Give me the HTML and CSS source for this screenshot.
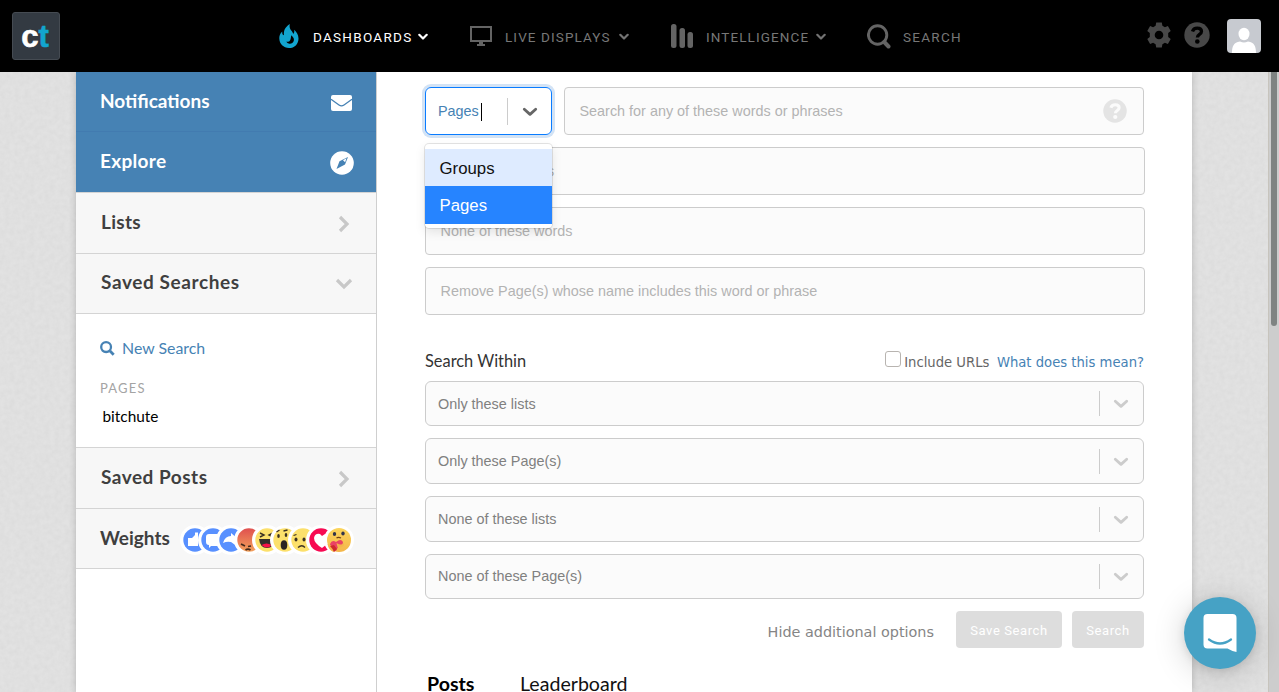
FILE: index.html
```html
<!DOCTYPE html>
<html lang="en">
<head>
<meta charset="utf-8">
<title>Search</title>
<link rel="stylesheet" href="styles.css">
</head>
<body>
<svg class="texture" aria-hidden="true"><filter id="grain"><feTurbulence type="fractalNoise" baseFrequency="0.2" numOctaves="3" seed="4"/><feColorMatrix values="0 0 0 0 0.45  0 0 0 0 0.45  0 0 0 0 0.45  0.2 0 0 0 -0.05"/></filter><rect width="100%" height="100%" filter="url(#grain)"/></svg>
<header class="topbar">
  <div class="logo"><span class="logo-c">c</span><span class="logo-t">t</span></div>
  <nav class="nav">
    <a class="nav-item active nav-dash">
      <svg width="20" height="24" viewBox="0 0 20 24"><path d="M10.800 0C5.500 3.600 4.600 7 5 11.200c-1.700-.5-1.900-2-1.700-3.800C1 9.400.3 11.700.3 14.300.3 19.900 4.500 24 10 24s9.500-4 9.500-9.600c0-3.800-2.100-6.600-4.300-8.600.3 1.900.1 3.200-1 4.100-.6-3.400-4.600-4-3.400-9.900zM12.300 11.300c2.200 1.900 3 3.600 2.500 5.500-.6 2.400-3.200 3.300-5 2.700-1.300-.4-2.100-1.200-2.300-2.100 1.500.8 2.700.4 3.500-.8 1.100-1.600.7-3.200 1.300-5.300z" fill="#12a5cf" fill-rule="evenodd"/></svg>
      <span class="nav-label">DASHBOARDS</span>
      <svg class="caret" width="10" height="8" viewBox="0 0 10 8"><path d="M1.300 1.800 5 5.500 8.700 1.800"/></svg>
    </a>
    <a class="nav-item nav-live">
      <svg width="22" height="21" viewBox="0 0 22 21"><path d="M1 1h20v14H1z" fill="none" stroke="#646464" stroke-width="2"/><path d="M9 15h4v3h2v2H7v-2h2z" fill="#646464"/></svg>
      <span class="nav-label">LIVE DISPLAYS</span>
      <svg class="caret" width="10" height="8" viewBox="0 0 10 8"><path d="M1.300 1.800 5 5.500 8.700 1.800"/></svg>
    </a>
    <a class="nav-item nav-intel">
      <svg width="23" height="24" viewBox="0 0 23 24" fill="#646464"><rect width="5.500" height="24" rx="2.500"/><rect x="8.500" y="4" width="5.500" height="20" rx="2.500"/><rect x="16.500" y="8" width="5.500" height="16" rx="2.500"/></svg>
      <span class="nav-label">INTELLIGENCE</span>
      <svg class="caret" width="10" height="8" viewBox="0 0 10 8"><path d="M1.300 1.800 5 5.500 8.700 1.800"/></svg>
    </a>
    <a class="nav-item nav-search">
      <svg width="24" height="25" viewBox="0 0 24 25" fill="none" stroke="#646464"><circle cx="10.600" cy="11" r="9.200" stroke-width="2.900"/><path d="m17.200 18 4.300 4.500" stroke-width="4" stroke-linecap="round"/></svg>
      <span class="nav-label">SEARCH</span>
    </a>
  </nav>
  <div class="tools">
    <svg width="26" height="26" viewBox="-13 -13 26 26" fill="#484848"><path d="M-2.800-12.500h5.600l.6 3.300 2.500 1.400 3-1.100 2.800 4.800-2.500 2.200v3.800l2.500 2.200-2.800 4.800-3-1.100-2.500 1.400-.6 3.300h-5.600l-.6-3.300-2.500-1.400-3 1.100-2.800-4.800 2.500-2.200v-3.800l-2.500-2.200 2.800-4.800 3 1.100 2.500-1.400zM0-4.300a4.300 4.300 0 1 0 0 8.600a4.300 4.300 0 1 0 0-8.600z" fill-rule="evenodd"/></svg>
    <svg width="26" height="26" viewBox="0 0 26 26"><circle cx="13" cy="13" r="12.700" fill="#484848"/><path d="M8.500 9.500C9.300 7 11 6.200 13.200 6.200c2.500 0 4.300 1.300 4.300 3.400 0 2.900-4.100 2.800-4.100 5.800" fill="none" stroke="#000" stroke-width="3.300"/><circle cx="13.300" cy="19.500" r="2.300" fill="#000"/></svg>
    <svg class="avatar" width="34" height="34" viewBox="0 0 34 34"><rect width="34" height="34" rx="4" fill="#c7cad0"/><ellipse cx="17" cy="15" rx="5.500" ry="6.200" fill="#fff"/><path d="M5 34c0-6 1.500-11 8-11.500 3 1.400 5 1.400 8 0 6.500.5 8 5.500 8 11.500z" fill="#fff"/></svg>
  </div>
</header>

<div class="page">
  <aside class="sidebar">
    <div class="side-row blue first"><span class="t-notif">Notifications</span>
      <svg class="mail" width="21" height="16" viewBox="0 0 21 16"><rect width="21" height="16" rx="2" fill="#fff"/><path d="M0 4.300 8 10q2.500 1.700 5 0l8-5.700" fill="none" stroke="#4682b4" stroke-width="1.300"/></svg></div>
    <div class="side-row blue second"><span class="t-explore">Explore</span>
      <svg class="compass" width="24" height="24" viewBox="0 0 24 24"><circle cx="12" cy="12" r="11.800" fill="#fff"/><path d="M18 6 15 13.500 6.500 18 9.500 10.200z" fill="#4682b4"/><path d="m13 9.300 3.500-2-1.400 3.900z" fill="#fff"/></svg></div>
    <div class="side-row"><span class="t-lists">Lists</span>
      <svg class="chev-r" width="12" height="18" viewBox="0 0 12 18"><path d="m2 2 7 7-7 7"/></svg></div>
    <div class="side-row open"><span class="t-ss">Saved Searches</span>
      <svg class="chev-d" width="18" height="12" viewBox="0 0 18 12"><path d="m2 2 7 7 7-7"/></svg></div>
    <div class="saved">
      <a class="new-search"><svg width="15" height="15" viewBox="0 0 15 15" fill="none" stroke="#4682b4"><circle cx="6.100" cy="6.100" r="4.900" stroke-width="2.300"/><path d="m10 10 3.700 3.700" stroke-width="2.800"/></svg><span>New Search</span></a>
      <div class="group">PAGES</div>
      <a class="saved-item">bitchute</a>
    </div>
    <div class="side-row posts"><span class="t-sp">Saved Posts</span>
      <svg class="chev-r" width="12" height="18" viewBox="0 0 12 18"><path d="m2 2 7 7-7 7"/></svg></div>
    <div class="side-row weights"><span class="t-w">Weights</span>
      <svg class="reactions" width="174" height="30" viewBox="0 0 174 30">
        <defs>
          <linearGradient id="angry" x2="0" y2="1"><stop stop-color="#e0504f"/><stop offset="1" stop-color="#f3a15b"/></linearGradient>
          <linearGradient id="care" x2="0" y2="1"><stop stop-color="#fbd55b"/><stop offset="1" stop-color="#f4b64a"/></linearGradient>
        </defs>
        <g><circle cx="15" cy="15" r="15" fill="#fff"/><circle cx="15" cy="15" r="11.700" fill="#5890ff"/><path d="M8 13h4v8H8zm4 0 3-3V7.500h3V21h-6z" fill="#fff"/></g>
        <g transform="translate(18)"><circle cx="15" cy="15" r="15" fill="#fff"/><circle cx="15" cy="15" r="11.700" fill="#5890ff"/><path d="M8 12q0-3 3-3h12v12H13l-2 2v-3q-3 0-3-3z" fill="#fff"/></g>
        <g transform="translate(36)"><circle cx="15" cy="15" r="15" fill="#fff"/><circle cx="15" cy="15" r="11.700" fill="#5890ff"/><path d="M7 18q2-7 8-7V8l7 6v8l-7-5q-4-1-8 1z" fill="#fff"/></g>
        <g transform="translate(54)"><circle cx="15" cy="15" r="15" fill="#fff"/><circle cx="15" cy="15" r="11.700" fill="url(#angry)"/><path d="m7 19 4 2m3 .5 3-.5m-5.500 4q2.500-1.700 5 0" fill="none" stroke="#42291d" stroke-width="1.700"/></g>
        <g transform="translate(72)"><circle cx="15" cy="15" r="15" fill="#fff"/><circle cx="15" cy="15" r="11.700" fill="#fce06b"/><path d="m8 8 4 2-4 2m13-4-4 2 4 2" fill="none" stroke="#3c3122" stroke-width="1.400"/><path d="M7 14h15q0 9-7 9t-8-9z" fill="#332c2b"/><path d="M9.500 20q5-3 10 0-4 5-10 0z" fill="#f80e48"/></g>
        <g transform="translate(90)"><circle cx="15" cy="15" r="15" fill="#fff"/><circle cx="15" cy="15" r="11.700" fill="#fce06b"/><ellipse cx="8.500" cy="11" rx="1.300" ry="2" fill="#3c3122"/><ellipse cx="16" cy="10" rx="1.300" ry="2" fill="#3c3122"/><ellipse cx="14" cy="20" rx="3.300" ry="4.700" fill="#2b2422"/><path d="m6.500 7 3-2m4 1 4-1" stroke="#3c3122" stroke-width="1.300"/></g>
        <g transform="translate(108)"><circle cx="15" cy="15" r="15" fill="#fff"/><circle cx="15" cy="15" r="11.700" fill="#fce06b"/><ellipse cx="8" cy="14.500" rx="1.500" ry="2" fill="#3c3122"/><ellipse cx="16" cy="14.500" rx="1.500" ry="2" fill="#3c3122"/><path d="m5.500 10.500 3-1M10 22.500q4-3.500 7 0" fill="none" stroke="#3c3122" stroke-width="1.300"/></g>
        <g transform="translate(126)"><circle cx="15" cy="15" r="15" fill="#fff"/><circle cx="15" cy="15" r="11.700" fill="#f70a52"/><path d="M16 23q-8-5-8-10 1-5 6-4l2 2 3-2q5 0 4 5t-7 9z" fill="#fff"/></g>
        <g transform="translate(144)"><circle cx="15" cy="15" r="15" fill="#fff"/><circle cx="15" cy="15" r="12" fill="url(#care)"/><ellipse cx="10.500" cy="9" rx="1.700" ry="2.100" fill="#31344b"/><ellipse cx="19" cy="8.500" rx="1.700" ry="2.100" fill="#31344b"/><path d="M12.500 13q2-1.300 4.500 0" fill="none" stroke="#704116" stroke-width="1.300"/><path d="M6 19q2-5 6-2 5-4 7 0 0 4-5 5l-2 4q-6-3-6-7z" fill="#ea4264"/><path d="M3.500 19q4 0 7 7l-1 1q-5-2-6-8zm9-1q5 3 7 0 2 5-6 4z" fill="#f5b34c"/><path d="M6 21q3 3 4 6l3-3-3-4z" fill="#cf2a2c"/></g>
      </svg></div>
  </aside>

  <main class="content">
    <div class="query">
      <div class="type-select"><span class="value">Pages</span><i class="cursor"></i><i class="sep"></i>
        <svg class="arrow" width="16" height="10" viewBox="0 0 16 10"><path d="m2.300 2.200 5.700 5.200 5.700-5.200"/></svg>
        <div class="menu"><div class="option hover">Groups</div><div class="option chosen">Pages</div></div>
      </div>
      <div class="field grow">Search for any of these words or phrases
        <svg width="24" height="24" viewBox="0 0 26 26"><circle cx="13" cy="13" r="12.700" fill="#e4e4e4"/><path d="M8.500 9.500C9.300 7 11 6.200 13.200 6.200c2.500 0 4.300 1.300 4.300 3.400 0 2.900-4.100 2.800-4.100 5.800" fill="none" stroke="#fbfbfb" stroke-width="3.300"/><circle cx="13.300" cy="19.500" r="2.300" fill="#fbfbfb"/></svg></div>
    </div>
    <div class="field wide">All of these words</div>
    <div class="field wide">None of these words</div>
    <div class="field wide">Remove Page(s) whose name includes this word or phrase</div>

    <div class="within"><span class="within-title">Search Within</span>
      <span class="urls"><i class="checkbox"></i><span class="include">Include URLs</span><a>What does this mean?</a></span></div>
    <div class="selects">
      <div class="select"><span>Only these lists</span><i class="sep"></i><svg class="arrow" width="16" height="10" viewBox="0 0 16 10"><path d="m2.300 2.200 5.700 5.200 5.700-5.200"/></svg></div>
      <div class="select"><span>Only these Page(s)</span><i class="sep"></i><svg class="arrow" width="16" height="10" viewBox="0 0 16 10"><path d="m2.300 2.200 5.700 5.200 5.700-5.200"/></svg></div>
      <div class="select"><span>None of these lists</span><i class="sep"></i><svg class="arrow" width="16" height="10" viewBox="0 0 16 10"><path d="m2.300 2.200 5.700 5.200 5.700-5.200"/></svg></div>
      <div class="select last"><span>None of these Page(s)</span><i class="sep"></i><svg class="arrow" width="16" height="10" viewBox="0 0 16 10"><path d="m2.300 2.200 5.700 5.200 5.700-5.200"/></svg></div>
    </div>
    <div class="actions"><a class="hide">Hide additional options</a><div class="btn save">Save Search</div><div class="btn go">Search</div></div>
    <div class="tabs"><span class="tab-posts">Posts</span><span class="tab-lead">Leaderboard</span></div>
  </main>
</div>

<div class="scroll"><div class="thumb"></div></div>
<div class="chat"><svg width="36" height="40" viewBox="0 0 36 40"><path d="M5.500 1h25q4 0 4 4v34q-4-.5-9-3.500h-20q-4 0-4-4V5q0-4 4-4z" fill="#fff"/><path d="M7 26.500q11 8 22 0" fill="none" stroke="#46a2c5" stroke-width="2.300" stroke-linecap="round"/></svg></div>
</body>
</html>
```
FILE: styles.css
```css
* { box-sizing: border-box; }
body {
  margin: 0;
  width: 1279px;
  height: 692px;
  overflow: hidden;
  position: relative;
  background: #e2e2e2;
  font-family: "Liberation Sans", Arial, sans-serif;
}
svg { display: block; flex: none; }
i { display: block; flex: none; }
span { white-space: nowrap; }
.texture { position: absolute; inset: 0; width: 100%; height: 100%; }

/* top bar */
.topbar {
  position: relative;
  z-index: 3;
  height: 72px;
  background: #000;
  display: flex;
  align-items: center;
  padding: 0 18px 0 12px;
}
.logo {
  width: 48px;
  height: 48px;
  border-radius: 3px;
  background: #333a42;
  border: 1px solid #454b52;
  display: flex;
  justify-content: center;
  padding-right: 2px;
  font: bold 31px/47px "Liberation Sans", sans-serif;
}
.logo-c { color: #fff; -webkit-text-stroke: .6px #fff; }
.logo-t { color: #12a5cf; -webkit-text-stroke: .6px #12a5cf; }
.nav { display: flex; flex: 1; margin-left: 219px; }
.nav-item { display: flex; align-items: center; color: #777; }
.nav-label { font: 13.500px/20px Roboto, sans-serif; letter-spacing: 1.270px; padding-top: 1px; }
.caret { fill: none; stroke: #737373; stroke-width: 2.2; stroke-linecap: round; stroke-linejoin: round; margin-top: 1px; }
.active { color: #fff; }
.active .caret { stroke: #fff; }
.nav-dash { width: 191px; }
.nav-dash .nav-label { margin-left: 14px; width: 105px; }
.nav-live { width: 201px; }
.nav-live .nav-label { margin-left: 13px; width: 114px; letter-spacing: 1.100px; }
.nav-intel { width: 196px; }
.nav-intel .nav-label { margin-left: 12px; width: 110px; letter-spacing: 1.100px; }
.nav-search .nav-label { margin-left: 12px; }
.tools { display: flex; align-items: center; gap: 12px; }
.tools svg { margin-top: -2px; }
.tools .avatar { margin: 0 0 0 5px; }

/* page body */
.page {
  position: relative;
  display: flex;
  width: 1116px;
  height: 620px;
  margin-left: 76px;
  background: #fff;
  box-shadow: 0 0 7px rgba(0, 0, 0, .2);
}
.sidebar { width: 301px; border-right: 1px solid #cfcfcf; }
.side-row {
  height: 60px;
  display: flex;
  align-items: center;
  justify-content: space-between;
  background: #f7f7f7;
  border-bottom: 1px solid #d4d4d4;
  padding: 0 25px;
  font: bold 19px/24px Lato, sans-serif;
  color: #3f3f3f;
}
.side-row span { margin-top: -2px; }
.t-explore, .t-lists { letter-spacing: .3px; }
.t-ss { letter-spacing: .6px; }
.side-row .t-ss { margin-top: -3px; }
.t-sp { letter-spacing: .5px; }
.side-row.blue { background: #4682b4; color: #fff; border-color: #427bb0; padding: 0 22px 0 24px; }
.side-row.second { height: 61px; border-color: #d4d4d4; }
.side-row:nth-child(3) { height: 61px; }
.mail { margin-right: 2px; margin-top: 3px; }
.compass { margin-top: 2px; }
.chev-r, .chev-d { fill: none; stroke: #c8c8c8; stroke-width: 3.2; }
.chev-r { margin-right: 1px; margin-top: 2px; }
.side-row .chev-d { margin-right: -2px; margin-top: 1px; }
.saved { height: 134px; padding: 23px 24px 0; border-bottom: 1px solid #d4d4d4; }
.new-search { display: flex; align-items: center; gap: 7px; color: #4682b4; font: 15.900px/22px Lato, sans-serif; }
.group { margin-top: 20px; font: 13px/18px Lato, sans-serif; letter-spacing: 1.200px; color: #a4a4a4; }
.saved-item { display: block; margin: 8px 0 0 2.500px; font: 15.400px/22px Lato, sans-serif; color: #000; }
.posts { height: 61px; }
.weights { padding: 0 22px 0 24px; }
.reactions { margin-top: 2px; }

/* search form */
.content { padding: 15px 0 0 48px; width: 815px; }
.query { display: flex; gap: 12px; width: 719px; }
.type-select {
  position: relative;
  width: 127px;
  height: 48px;
  border: 1px solid #0a7cff;
  border-radius: 6px;
  box-shadow: 0 0 0 3px #d3e3f5;
  display: flex;
  align-items: center;
  padding-left: 12px;
  color: #4682b4;
  font-size: 14.400px;
}
.cursor { width: 1px; height: 18px; background: #000; margin: 2px 0 0 2px; }
.sep { width: 1px; background: #ccc; }
.type-select .sep { height: 27px; margin-left: 25px; }
.arrow { fill: none; stroke: #ccc; stroke-width: 2.800; stroke-linecap: round; stroke-linejoin: round; margin-top: 1px; }
.type-select .arrow { stroke: #666; margin-left: 14px; }
.menu {
  position: absolute;
  z-index: 2;
  left: -1px;
  top: 56px;
  width: 127px;
  padding: 5px 0 4px;
  border-radius: 4px;
  background: #fff;
  box-shadow: 0 0 0 1px rgba(0, 0, 0, .1), 0 4px 11px rgba(0, 0, 0, .1);
}
.option { height: 37px; padding-left: 14.500px; font-size: 16.800px; line-height: 40px; color: #111; }
.hover { background: #deebff; }
.chosen { height: 38px; background: #2684ff; color: #fff; }
.field {
  height: 48px;
  border: 1px solid #ccc;
  border-radius: 4px;
  background: #fbfbfb;
  color: #b3b3b3;
  font-size: 14.400px;
  line-height: 46px;
  padding-left: 14.500px;
}
.grow { flex: 1; display: flex; align-items: center; justify-content: space-between; padding-right: 16px; }
.wide { width: 720px; margin-top: 12px; }
.within { width: 719px; margin-top: 35px; height: 31px; display: flex; justify-content: space-between; }
.within-title { font: 16.400px/22px Lato, sans-serif; color: #333; }
.urls { display: flex; font: 13.200px/26px "DejaVu Sans", sans-serif; color: #666; }
.checkbox { width: 16px; height: 16px; border: 1px solid #b8b4b0; border-radius: 3px; background: #fff; margin: 1px 3px 0 0; }
.include { margin-right: 7.500px; }
.urls a { color: #4682b4; }
.selects { display: grid; gap: 12px; width: 719px; grid-template-rows: 45px 46px 46px 45px; }
.select {
  display: flex;
  align-items: center;
  border: 1px solid #ccc;
  border-radius: 6px;
  background: #fbfbfb;
  color: #808080;
  font-size: 14.400px;
  padding: 0 14px 0 12px;
}
.select.last span { margin-top: -1px; }
.select .sep { margin-left: auto; height: 25px; }
.select .arrow { margin-left: 13px; }
.actions { width: 719px; display: flex; margin-top: 12px; justify-content: flex-end; }
.hide { font: 14.400px/42px "DejaVu Sans", sans-serif; color: #858585; margin-right: 22px; height: 37px; }
.btn { height: 37px; border-radius: 4px; background: #ddd; color: #fff; font: 13px/39px Roboto, sans-serif; letter-spacing: .6px; text-align: center; }
.save { width: 106px; margin-right: 10px; }
.go { width: 72px; }
.tabs { display: flex; margin-top: 24px; font: 19.600px/24px Lato, sans-serif; color: #111; }
.tab-posts { margin-left: 2px; width: 93px; font-weight: bold; color: #000; }

/* scrollbar and chat launcher */
.scroll { position: absolute; z-index: 2; top: 72px; right: 0; width: 11px; height: 620px; background: #cdcdcd; border-left: 1px solid #c7c4bd; }
.thumb { width: 6px; height: 254px; margin-left: 2px; background: #7f8382; border-radius: 0 0 3px 3px; }
.chat {
  position: absolute;
  z-index: 4;
  left: 1184px;
  top: 597px;
  width: 72px;
  height: 72px;
  border-radius: 50%;
  background: #46a2c5;
  box-shadow: 0 2px 8px rgba(0, 0, 0, .1), 0 4px 32px rgba(0, 0, 0, .18);
  display: flex;
  align-items: center;
  justify-content: center;
}
```
